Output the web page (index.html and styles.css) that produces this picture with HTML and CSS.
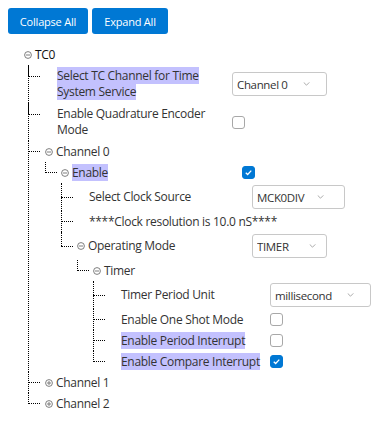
FILE: index.html
```html
<!DOCTYPE html>
<html lang="en">
  <head>
    <meta charset="UTF-8" />
    <meta name="viewport" content="width=device-width, initial-scale=1.0" />
    <title>TC0 Configuration</title>
    <link rel="stylesheet" href="styles.css">
  </head>

  <body>
    <div class="toolbar">
      <button type="button" class="btn-collapse">Collapse All</button>
      <button type="button" class="btn-expand">Expand All</button>
    </div>

    <ul class="tree">
      <!-- TC0 -->
      <li class="root">
        <div class="row">
          <span class="node">
            <svg class="toggle" viewBox="0 0 8 8"><circle cx="4" cy="4" r="3.4" /><path d="M2 4h4" /></svg>
            <span class="text">TC0</span>
          </span>
        </div>
        <ul class="level-1">
          <li>
            <div class="row wrap">
              <span class="node w1"><span class="slot"></span><span class="text"><span class="hl">Select TC Channel for Time System Service</span></span></span>
              <div class="select sel-channel">
                <span>Channel 0</span>
                <svg class="chevron" viewBox="0 0 8 5"><path d="M0.5 0.5L4 4L7.5 0.5" /></svg>
              </div>
            </div>
          </li>
          <li>
            <div class="row wrap">
              <span class="node w1"><span class="slot"></span><span class="text">Enable Quadrature Encoder Mode</span></span>
              <span class="checkbox"></span>
            </div>
          </li>
          <li>
            <div class="row">
              <span class="node">
                <svg class="toggle" viewBox="0 0 8 8"><circle cx="4" cy="4" r="3.4" /><path d="M2 4h4" /></svg>
                <span class="text">Channel 0</span>
              </span>
            </div>
            <ul>
              <li>
                <div class="row">
                  <span class="node w2">
                    <svg class="toggle" viewBox="0 0 8 8"><circle cx="4" cy="4" r="3.4" /><path d="M2 4h4" /></svg>
                    <span class="text"><span class="hl">Enable</span></span>
                  </span>
                  <span class="checkbox checked">
                    <svg viewBox="0 0 12 12"><path d="M3 6.2L5.1 8.2L9 4" /></svg>
                  </span>
                </div>
                <ul>
                  <li>
                    <div class="row tall">
                      <span class="node w3"><span class="slot"></span><span class="text">Select Clock Source</span></span>
                      <div class="select sel-clock">
                        <span>MCK0DIV</span>
                        <svg class="chevron" viewBox="0 0 8 5"><path d="M0.5 0.5L4 4L7.5 0.5" /></svg>
                      </div>
                    </div>
                  </li>
                  <li>
                    <div class="row">
                      <span class="node"><span class="slot"></span><span class="text">****Clock resolution is 10.0 nS****</span></span>
                    </div>
                  </li>
                  <li>
                    <div class="row tall">
                      <span class="node w3">
                        <svg class="toggle" viewBox="0 0 8 8"><circle cx="4" cy="4" r="3.4" /><path d="M2 4h4" /></svg>
                        <span class="text">Operating Mode</span>
                      </span>
                      <div class="select sel-mode">
                        <span>TIMER</span>
                        <svg class="chevron" viewBox="0 0 8 5"><path d="M0.5 0.5L4 4L7.5 0.5" /></svg>
                      </div>
                    </div>
                    <ul>
                      <li>
                        <div class="row">
                          <span class="node">
                            <svg class="toggle" viewBox="0 0 8 8"><circle cx="4" cy="4" r="3.4" /><path d="M2 4h4" /></svg>
                            <span class="text">Timer</span>
                          </span>
                        </div>
                        <ul>
                          <li>
                            <div class="row tall">
                              <span class="node w5"><span class="slot"></span><span class="text">Timer Period Unit</span></span>
                              <div class="select sel-unit">
                                <span>millisecond</span>
                                <svg class="chevron" viewBox="0 0 8 5"><path d="M0.5 0.5L4 4L7.5 0.5" /></svg>
                              </div>
                            </div>
                          </li>
                          <li>
                            <div class="row">
                              <span class="node w5"><span class="slot"></span><span class="text">Enable One Shot Mode</span></span>
                              <span class="checkbox"></span>
                            </div>
                          </li>
                          <li>
                            <div class="row">
                              <span class="node w5"><span class="slot"></span><span class="text"><span class="hl">Enable Period Interrupt</span></span></span>
                              <span class="checkbox"></span>
                            </div>
                          </li>
                          <li>
                            <div class="row">
                              <span class="node w5"><span class="slot"></span><span class="text"><span class="hl">Enable Compare Interrupt</span></span></span>
                              <span class="checkbox checked">
                                <svg viewBox="0 0 12 12"><path d="M3 6.2L5.1 8.2L9 4" /></svg>
                              </span>
                            </div>
                          </li>
                        </ul>
                      </li>
                    </ul>
                  </li>
                </ul>
              </li>
            </ul>
          </li>
          <li>
            <div class="row">
              <span class="node">
                <svg class="toggle" viewBox="0 0 8 8"><circle cx="4" cy="4" r="3.4" /><path d="M2 4h4M4 2v4" /></svg>
                <span class="text">Channel 1</span>
              </span>
            </div>
          </li>
          <li>
            <div class="row">
              <span class="node">
                <svg class="toggle" viewBox="0 0 8 8"><circle cx="4" cy="4" r="3.4" /><path d="M2 4h4M4 2v4" /></svg>
                <span class="text">Channel 2</span>
              </span>
            </div>
          </li>
        </ul>
      </li>
    </ul>
  </body>
</html>
```

FILE: styles.css
```css
body {
  margin: 8px;
  font-family: "Open Sans", "Noto Sans", sans-serif;
  font-size: 12px;
  letter-spacing: -0.3px;
  color: #333;
  background: #fff;
}

/* toolbar */
.toolbar {
  display: flex;
  gap: 4px;
}

.toolbar button {
  height: 26px;
  padding: 0;
  border: none;
  border-radius: 3px;
  background-color: #0078d4;
  color: white;
  font-family: inherit;
  font-size: 11px;
  letter-spacing: -0.2px;
  cursor: pointer;
}

.toolbar button:hover {
  background-color: #106ebe;
}

.btn-collapse {
  width: 80px;
}

.btn-expand {
  width: 76px;
}

/* tree */
.tree,
.tree ul {
  list-style: none;
  margin: 0;
  padding: 0;
}

.tree {
  margin-top: 10px;
}

.tree li {
  position: relative;
}

.tree ul {
  margin-left: 16px;
}

.tree .level-1 {
  margin-left: 20px;
}

.tree .level-1 > li > ul {
  margin-left: 17px;
}

.row {
  position: relative;
  display: flex;
  align-items: center;
  min-height: 21px;
  padding-left: 16px;
}

.level-1 > li > .row {
  padding-left: 17px;
}

.root > .row {
  padding-left: 16px;
}

.row.wrap {
  align-items: flex-start;
  padding-top: 3px;
  padding-bottom: 3px;
}

.row.wrap .select,
.row.wrap .checkbox {
  align-self: center;
}

.row.tall {
  min-height: 28px;
}

/* dotted connectors */
.tree ul > li:not(:last-child)::before {
  content: "";
  position: absolute;
  left: 0;
  top: 0;
  bottom: 0;
  border-left: 1px dotted #000;
}

.tree ul > li > .row::before {
  content: "";
  position: absolute;
  left: 0;
  top: 0;
  height: 11px;
  border-left: 1px dotted #000;
}

.tree ul > li > .row::after {
  content: "";
  position: absolute;
  left: 0;
  top: 10px;
  width: 12px;
  border-top: 1px dotted #000;
}

.tree ul > li > .row.wrap::after {
  top: 11px;
}

.tree ul > li > .row.tall::before {
  height: 14px;
}

.tree ul > li > .row.tall::after {
  top: 14px;
}

.node {
  display: flex;
  align-items: flex-start;
  line-height: 16px;
  flex: none;
}

.node .text {
  flex: 1;
}

.toggle,
.slot {
  flex: none;
  width: 8px;
  height: 8px;
  margin: 4px 4px 0 0;
}

.root .toggle {
  margin-right: 3px;
}

.toggle circle,
.toggle path {
  fill: none;
  stroke: #707070;
  stroke-width: 0.9;
}

.root > .row .text {
  color: #111;
}

.hl {
  background-color: #c3c1fe;
}

.w1 {
  width: 177px;
  margin-right: 10px;
}

.w2 {
  width: 181px;
}

.w3 {
  width: 175px;
}

.w5 {
  width: 161px;
}

/* controls */
.select {
  display: flex;
  align-items: center;
  box-sizing: border-box;
  height: 24px;
  padding-left: 4px;
  border: 1px solid #c8c8c8;
  border-radius: 3px;
  font-size: 11.5px;
  letter-spacing: -0.35px;
  color: #333;
  flex: none;
}

.select span {
  flex: 1;
  white-space: nowrap;
  overflow: hidden;
}

.chevron {
  flex: none;
  width: 7px;
  height: 4px;
}

.chevron path {
  fill: none;
  stroke: #8a8a8a;
  stroke-width: 0.9;
}

.sel-channel {
  width: 95px;
  padding-right: 16px;
}

.sel-clock {
  width: 93px;
  padding-right: 20px;
}

.sel-mode {
  width: 75px;
  padding-right: 10px;
}

.sel-unit {
  width: 101px;
  padding-right: 16px;
}

.checkbox {
  display: flex;
  align-items: center;
  justify-content: center;
  box-sizing: border-box;
  width: 13px;
  height: 13px;
  border: 1px solid #a8a8a8;
  border-radius: 3px;
  background: #fff;
  flex: none;
}

.checkbox.checked {
  border-color: #0078d4;
  background: #0078d4;
}

.checkbox svg {
  width: 11px;
  height: 11px;
}

.checkbox path {
  fill: none;
  stroke: #fff;
  stroke-width: 1.4;
}
```
